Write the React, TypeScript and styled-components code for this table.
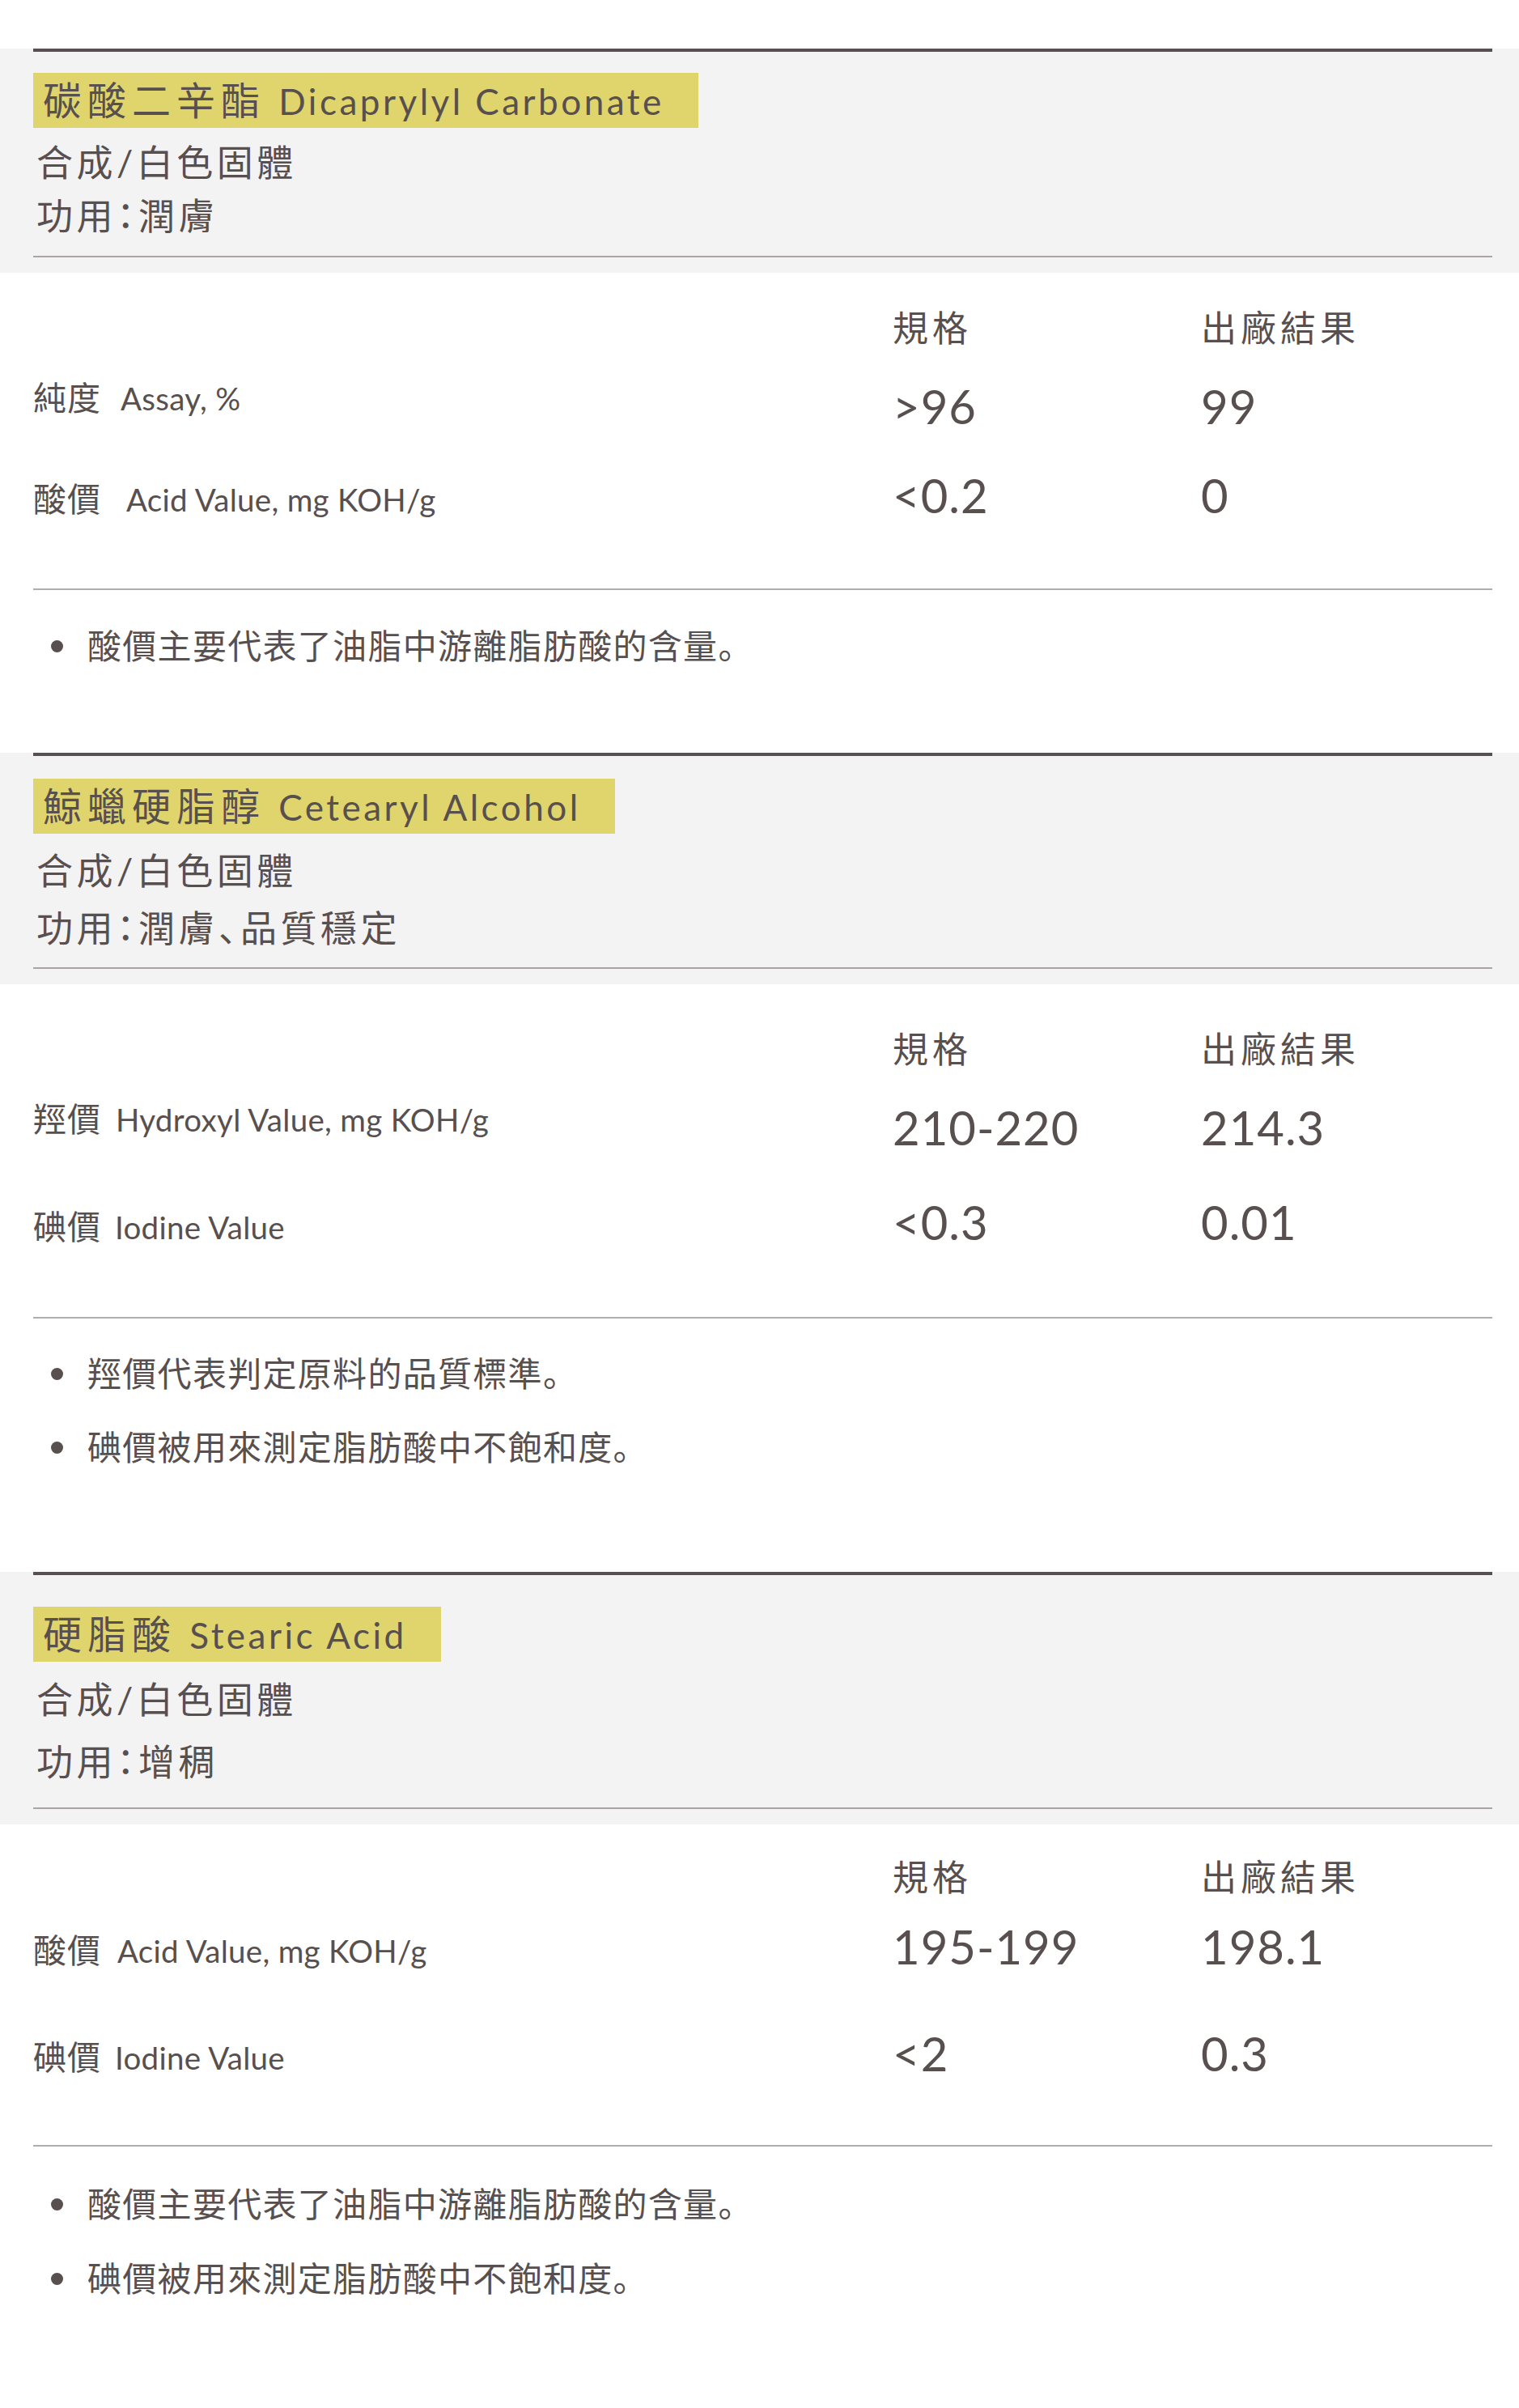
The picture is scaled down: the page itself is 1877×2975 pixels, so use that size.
import styled, { createGlobalStyle } from 'styled-components'

type Row = {
  zh: string
  en: string
  gap: number
  spec: string
  result: string
}

type Spacing = {
  head: [number, number, number, number]
  labelTop: number
  labelGap: number
  valueTop: number
  valueGaps: number[]
  table: number
  noteTop: number
  noteGap: number
  bottom: number
}

type Material = {
  name: string
  en: string
  info: string[]
  rows: Row[]
  notes: string[]
  sp: Spacing
}

const GlobalStyle = createGlobalStyle`
  html, body {
    margin: 0;
    padding: 0;
    background: #ffffff;
  }
  body {
    font-family: Lato, "Noto Sans CJK TC", sans-serif;
    color: #584f4f;
  }
`

const Page = styled.div`
  width: 1877px;
  padding-top: 60px;
`
const Head = styled.div`
  background-color: #f3f3f3;
  padding: 0 33px 19px 41px;
`
const HeadInner = styled.div<{ $pt: number; $pb: number }>`
  display: flex;
  flex-direction: column;
  align-items: flex-start;
  border-top: 4px solid #574f50;
  border-bottom: 2px solid #aca4a4;
  padding: ${(p) => p.$pt}px 0 ${(p) => p.$pb}px;
`
const NameTag = styled.h2`
  display: block;
  margin: 0;
  height: 68px;
  padding: 0 42px 0 12px;
  background-color: #e0d46c;
  font-size: 48px;
  font-weight: 400;
  line-height: 68px;
  letter-spacing: 7px;
  white-space: nowrap;
`
const EnName = styled.span`
  font-size: 44px;
  letter-spacing: 3.5px;
  margin-left: -3px;
`
const InfoLine = styled.p<{ $mt: number }>`
  margin: ${(p) => p.$mt}px 0 0;
  padding-left: 4px;
  font-size: 45px;
  line-height: 60px;
  letter-spacing: 4.5px;
  font-feature-settings: 'halt';
  white-space: nowrap;
`
// 、 and 。 sit low-left in the reference, as in the SC face
const Punct = styled.span`
  font-family: 'Noto Sans CJK SC', sans-serif;
  line-height: 0;
`
const Body = styled.div<{ $pb: number }>`
  padding: 0 33px ${(p) => p.$pb}px 41px;
`
const SpecArea = styled.div<{ $h: number }>`
  display: flex;
  align-items: flex-start;
  height: ${(p) => p.$h}px;
`
const LabelCol = styled.div<{ $pt: number; $gap: number }>`
  flex: none;
  width: 1062px;
  display: flex;
  flex-direction: column;
  gap: ${(p) => p.$gap}px;
  padding-top: ${(p) => p.$pt}px;
`
const Label = styled.div`
  font-size: 41px;
  line-height: 60px;
  letter-spacing: 1px;
  white-space: nowrap;
`
const LabelEn = styled.span<{ $gap: number }>`
  font-size: 38.5px;
  letter-spacing: 0.3px;
  margin-left: ${(p) => p.$gap}px;
`
const ValueCol = styled.div<{ $pt: number }>`
  flex: 1;
  padding-top: ${(p) => p.$pt}px;
`
const ValueRow = styled.div<{ $mt: number }>`
  display: grid;
  grid-template-columns: 381px 1fr;
  margin-top: ${(p) => p.$mt}px;
`
const ColHead = styled.div`
  font-size: 44px;
  line-height: 60px;
  letter-spacing: 5px;
  white-space: nowrap;
`
const Value = styled.div`
  font-size: 58px;
  line-height: 70px;
  letter-spacing: 1px;
  white-space: nowrap;
`
const Divider = styled.hr`
  margin: 0;
  border: 0;
  height: 2px;
  background-color: #aeaeae;
`
const Notes = styled.ul<{ $pt: number; $gap: number }>`
  list-style: none;
  margin: 0;
  padding: ${(p) => p.$pt}px 0 0;
  display: flex;
  flex-direction: column;
  gap: ${(p) => p.$gap}px;
`
const Note = styled.li`
  display: flex;
  align-items: center;
  height: 60px;
  font-size: 42px;
  line-height: 60px;
  letter-spacing: 1.3px;
  white-space: nowrap;
  &::before {
    content: '';
    flex: none;
    width: 15px;
    height: 15px;
    border-radius: 50%;
    background-color: #584f4f;
    margin: 0 30px 0 22px;
  }
`

const materials: Material[] = [
  {
    name: '碳酸二辛酯',
    en: 'Dicaprylyl Carbonate',
    info: ['合成/白色固體', '功用：潤膚'],
    rows: [
      { zh: '純度', en: 'Assay, %', gap: 24, spec: '>96', result: '99' },
      { zh: '酸價', en: 'Acid Value, mg KOH/g', gap: 31, spec: '<0.2', result: '0' },
    ],
    notes: ['酸價主要代表了油脂中游離脂肪酸的含量。'],
    sp: {
      head: [26, 13, 6, 19],
      labelTop: 125,
      labelGap: 65,
      valueTop: 38,
      valueGaps: [32, 40],
      table: 390,
      noteTop: 39,
      noteGap: 31,
      bottom: 102,
    },
  },
  {
    name: '鯨蠟硬脂醇',
    en: 'Cetearyl Alcohol',
    info: ['合成/白色固體', '功用：潤膚、品質穩定'],
    rows: [
      { zh: '羥價', en: 'Hydroxyl Value, mg KOH/g', gap: 18, spec: '210-220', result: '214.3' },
      { zh: '碘價', en: 'Iodine Value', gap: 17, spec: '<0.3', result: '0.01' },
    ],
    notes: ['羥價代表判定原料的品質標準。', '碘價被用來測定脂肪酸中不飽和度。'],
    sp: {
      head: [28, 16, 11, 18],
      labelTop: 137,
      labelGap: 73,
      valueTop: 50,
      valueGaps: [32, 47],
      table: 411,
      noteTop: 38,
      noteGap: 31,
      bottom: 124,
    },
  },
  {
    name: '硬脂酸',
    en: 'Stearic Acid',
    info: ['合成/白色固體', '功用：增稠'],
    rows: [
      { zh: '酸價', en: 'Acid Value, mg KOH/g', gap: 20, spec: '195-199', result: '198.1' },
      { zh: '碘價', en: 'Iodine Value', gap: 17, spec: '<2', result: '0.3' },
    ],
    notes: ['酸價主要代表了油脂中游離脂肪酸的含量。', '碘價被用來測定脂肪酸中不飽和度。'],
    sp: {
      head: [39, 17, 17, 26],
      labelTop: 126,
      labelGap: 72,
      valueTop: 35,
      valueGaps: [21, 62],
      table: 396,
      noteTop: 41,
      noteGap: 32,
      bottom: 130,
    },
  },
]

// wrap 、 and 。 so they take the low-left form
function withPunct(text: string) {
  return text.split(/([、。])/).map((part, i) =>
    part === '、' || part === '。' ? <Punct key={i}>{part}</Punct> : part
  )
}

function MaterialSection({ m }: { m: Material }) {
  const [pt, tagGap, lineGap, pb] = m.sp.head
  return (
    <section>
      <Head>
        <HeadInner $pt={pt} $pb={pb}>
          <NameTag>
            {m.name} <EnName>{m.en}</EnName>
          </NameTag>
          {m.info.map((line, i) => (
            <InfoLine key={line} $mt={i === 0 ? tagGap : lineGap}>
              {withPunct(line)}
            </InfoLine>
          ))}
        </HeadInner>
      </Head>
      <Body $pb={m.sp.bottom}>
        <SpecArea $h={m.sp.table}>
          <LabelCol $pt={m.sp.labelTop} $gap={m.sp.labelGap}>
            {m.rows.map((r) => (
              <Label key={r.zh + r.en}>
                {r.zh}
                <LabelEn $gap={r.gap}>{r.en}</LabelEn>
              </Label>
            ))}
          </LabelCol>
          <ValueCol $pt={m.sp.valueTop}>
            <ValueRow $mt={0}>
              <ColHead>規格</ColHead>
              <ColHead>出廠結果</ColHead>
            </ValueRow>
            {m.rows.map((r, i) => (
              <ValueRow key={r.spec} $mt={m.sp.valueGaps[i]}>
                <Value>{r.spec}</Value>
                <Value>{r.result}</Value>
              </ValueRow>
            ))}
          </ValueCol>
        </SpecArea>
        <Divider />
        <Notes $pt={m.sp.noteTop} $gap={m.sp.noteGap}>
          {m.notes.map((n) => (
            <Note key={n}>
              <span>{withPunct(n)}</span>
            </Note>
          ))}
        </Notes>
      </Body>
    </section>
  )
}

function App() {
  return (
    <>
      <GlobalStyle />
      <Page>
        {materials.map((m) => (
          <MaterialSection key={m.name} m={m} />
        ))}
      </Page>
    </>
  )
}

export default App
